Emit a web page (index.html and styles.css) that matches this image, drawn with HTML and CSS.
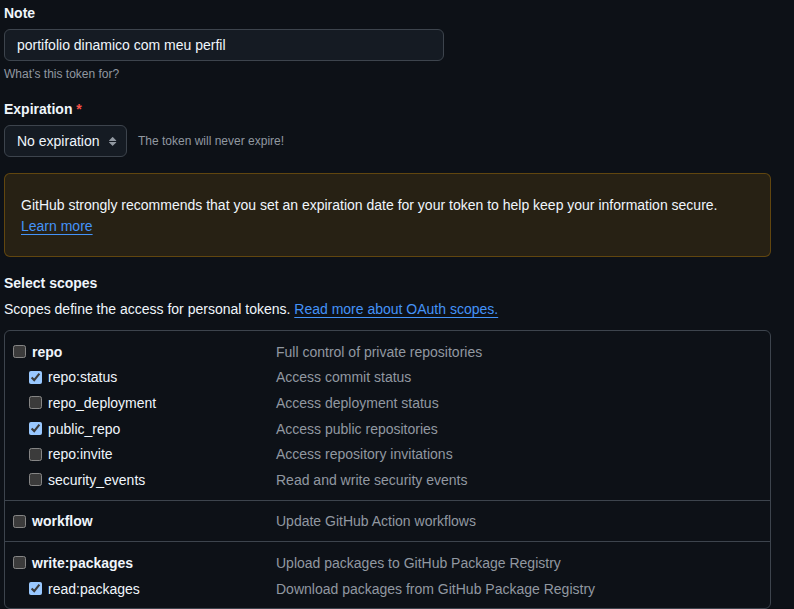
FILE: index.html
```html
<!DOCTYPE html>
<html lang="en">
<head>
<meta charset="utf-8">
<title>New personal access token</title>
<link rel="stylesheet" href="styles.css">
</head>
<body>
<div class="page">
  <div class="field">
    <label class="label" for="note">Note</label>
    <div class="input">portifolio dinamico com meu perfil</div>
    <p class="hint">What’s this token for?</p>
  </div>

  <div class="field field-exp">
    <div class="label">Expiration <span class="req">*</span></div>
    <div class="exp-row">
      <div class="select">
        <span>No expiration</span>
        <svg class="select-arrow" width="16" height="16" viewBox="0 0 16 16"><path fill="#9198a1" d="m4.074 9.427 3.396 3.396a.25.25 0 0 0 .354 0l3.396-3.396A.25.25 0 0 0 11.043 9H4.251a.25.25 0 0 0-.177.427ZM4.074 7.47 7.470 4.073a.25.25 0 0 1 .354 0L11.22 7.470a.25.25 0 0 1-.177.426H4.251a.25.25 0 0 1-.177-.426Z"/></svg>
      </div>
      <span class="exp-note">The token will never expire!</span>
    </div>
  </div>

  <div class="flash">
    <p>GitHub strongly recommends that you set an expiration date for your token to help keep your information secure.</p>
    <a class="link" href="#">Learn more</a>
  </div>

  <h3 class="section-title">Select scopes</h3>
  <p class="section-desc">Scopes define the access for personal tokens. <a class="link" href="#">Read more about OAuth scopes.</a></p>

  <div class="scopes">
    <div class="group">
      <label class="row top"><span class="name"><input type="checkbox"><b>repo</b></span><span class="desc">Full control of private repositories</span></label>
      <label class="row sub"><span class="name"><input type="checkbox" checked><span>repo:status</span></span><span class="desc">Access commit status</span></label>
      <label class="row sub"><span class="name"><input type="checkbox"><span>repo_deployment</span></span><span class="desc">Access deployment status</span></label>
      <label class="row sub"><span class="name"><input type="checkbox" checked><span>public_repo</span></span><span class="desc">Access public repositories</span></label>
      <label class="row sub"><span class="name"><input type="checkbox"><span>repo:invite</span></span><span class="desc">Access repository invitations</span></label>
      <label class="row sub"><span class="name"><input type="checkbox"><span>security_events</span></span><span class="desc">Read and write security events</span></label>
    </div>
    <div class="group">
      <label class="row top"><span class="name"><input type="checkbox"><b>workflow</b></span><span class="desc">Update GitHub Action workflows</span></label>
    </div>
    <div class="group">
      <label class="row top"><span class="name"><input type="checkbox"><b>write:packages</b></span><span class="desc">Upload packages to GitHub Package Registry</span></label>
      <label class="row sub"><span class="name"><input type="checkbox" checked><span>read:packages</span></span><span class="desc">Download packages from GitHub Package Registry</span></label>
    </div>
  </div>
</div>
</body>
</html>
```

FILE: styles.css
```css
html, body {
  margin: 0;
  padding: 0;
  background: #0d1117;
  color: #f0f6fc;
  font-family: "Liberation Sans", Arial, sans-serif;
  font-size: 14px;
  color-scheme: dark;
}

.page {
  padding: 3px 23px 0 4px;
}

.label {
  display: block;
  font-weight: 700;
  line-height: 20px;
  margin-bottom: 6px;
}

.req {
  color: #f85149;
}

.input {
  box-sizing: border-box;
  width: 440px;
  height: 32px;
  padding: 0 12px;
  line-height: 30px;
  border: 1px solid #3d444d;
  border-radius: 6px;
  background: #151b23;
  color: #f0f6fc;
}

.hint {
  margin: 4px 0 0;
  font-size: 12px;
  line-height: 18px;
  color: #9198a1;
}

.field-exp {
  margin-top: 16px;
}

.exp-row {
  display: flex;
  align-items: center;
  gap: 11px;
}

.select {
  box-sizing: border-box;
  width: 123px;
  height: 32px;
  display: flex;
  align-items: center;
  justify-content: space-between;
  padding: 0 5px 0 12px;
  border: 1px solid #3d444d;
  border-radius: 6px;
  background: #151b23;
}

.exp-note {
  font-size: 12px;
  color: #9198a1;
}

.flash {
  margin-top: 16px;
  padding: 21px 16px 19px;
  border: 1px solid rgba(187, 128, 9, 0.4);
  border-radius: 6px;
  background: rgba(187, 128, 9, 0.15);
  line-height: 21px;
}

.flash p {
  margin: 0;
}

.link {
  color: #4493f8;
  text-decoration: underline;
  text-underline-offset: 3px;
}

.section-title {
  margin: 16px 0 0;
  font-size: 14px;
  font-weight: 700;
  line-height: 21px;
}

.section-desc {
  margin: 5px 0 0;
  line-height: 21px;
}

.scopes {
  margin-top: 10px;
  border: 1px solid #3d444d;
  border-radius: 6px;
}

.group {
  padding: 8px 0 7px 8px;
}

.group + .group {
  border-top: 1px solid #3d444d;
}

.row {
  display: grid;
  grid-template-columns: 263px 1fr;
  align-items: center;
  height: 25.6px;
}

.name {
  display: flex;
  align-items: center;
  gap: 6px;
}

.sub .name {
  padding-left: 16px;
}

.name input {
  width: 13px;
  height: 13px;
  margin: 0;
}

.desc {
  color: #9198a1;
}
```
